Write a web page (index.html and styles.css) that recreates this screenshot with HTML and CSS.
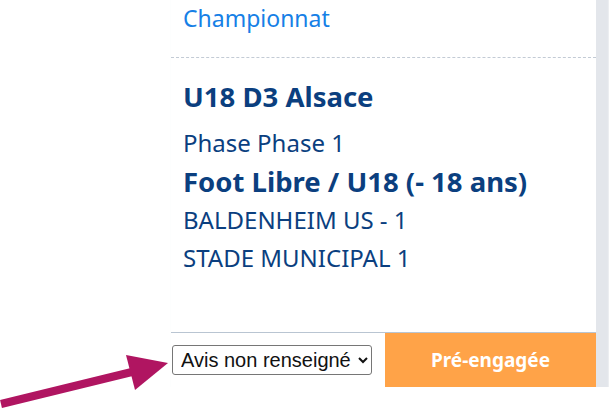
FILE: index.html
```html
<!DOCTYPE html>
<html lang="fr">
<head>
  <meta charset="UTF-8">
  <meta name="viewport" content="width=device-width, initial-scale=1">
  <title>Match</title>
  <link rel="stylesheet" href="styles.css">
</head>
<body>

  <div class="page">
    <div class="card">
      <div class="card-head">
        <a href="#" class="type">Championnat</a>
      </div>

      <div class="card-body">
        <h3 class="competition">U18 D3 Alsace</h3>
        <p class="line phase">Phase Phase 1</p>
        <h4 class="category">Foot Libre / U18 (- 18 ans)</h4>
        <p class="line">BALDENHEIM US - 1</p>
        <p class="line">STADE MUNICIPAL 1</p>
      </div>

      <div class="card-foot">
        <div class="cell">
          <select class="avis">
            <option>Avis non renseigné</option>
            <option>Favorable</option>
            <option>Défavorable</option>
          </select>
        </div>
        <div class="statut">Pré-engagée</div>
      </div>
    </div>
  </div>

  <svg class="arrow" width="180" height="69" viewBox="0 340 180 69">
    <line x1="1" y1="404" x2="140" y2="370" stroke="#b01561" stroke-width="8"/>
    <polygon points="126,355 168,363 135,390" fill="#b01561"/>
  </svg>

</body>
</html>
```

FILE: styles.css
```css
body {
  margin: 0;
  background: #fff;
  font-family: 'Noto Sans', sans-serif;
  color: #0b3f7f;
}

.page {
  padding-left: 171px;
}

.card {
  width: 425px;
  background: #fff;
  box-shadow: 7px 1px 2px 6px #e3e6eb;
}

.card-head {
  padding: 3px 12px 24px;
  border-bottom: 1px dashed #c3cbd5;
}

.type {
  display: block;
  font-size: 23px;
  line-height: 30px;
  color: #1680e6;
  text-decoration: none;
}

.card-body {
  padding: 22px 12px 59px;
}

.competition,
.category {
  margin: 0;
  font-size: 27.5px;
  line-height: 34px;
  font-weight: bold;
}

.line {
  margin: 0;
  font-size: 24px;
  line-height: 30px;
}

.phase {
  margin: 14px 0 7px;
}

.category {
  margin-bottom: 6px;
}

.line + .line {
  margin-top: 8px;
}

.card-foot {
  display: grid;
  grid-template-columns: 214px 1fr;
  height: 54px;
  border-top: 1px solid #b9c5d2;
}

.cell {
  display: flex;
  align-items: center;
  padding-left: 1px;
}

.avis {
  width: 200px;
  height: 30px;
  padding-left: 4px;
  font-family: 'Liberation Sans', Arial, sans-serif;
  font-size: 20px;
  color: #111;
  background: #fff;
  border: 1px solid #767676;
  border-radius: 3px;
}

.statut {
  display: flex;
  align-items: center;
  justify-content: center;
  background: #ffa348;
  color: #fff;
  font-size: 19px;
  font-weight: bold;
}

.arrow {
  position: absolute;
  left: 0;
  top: 340px;
}
```
